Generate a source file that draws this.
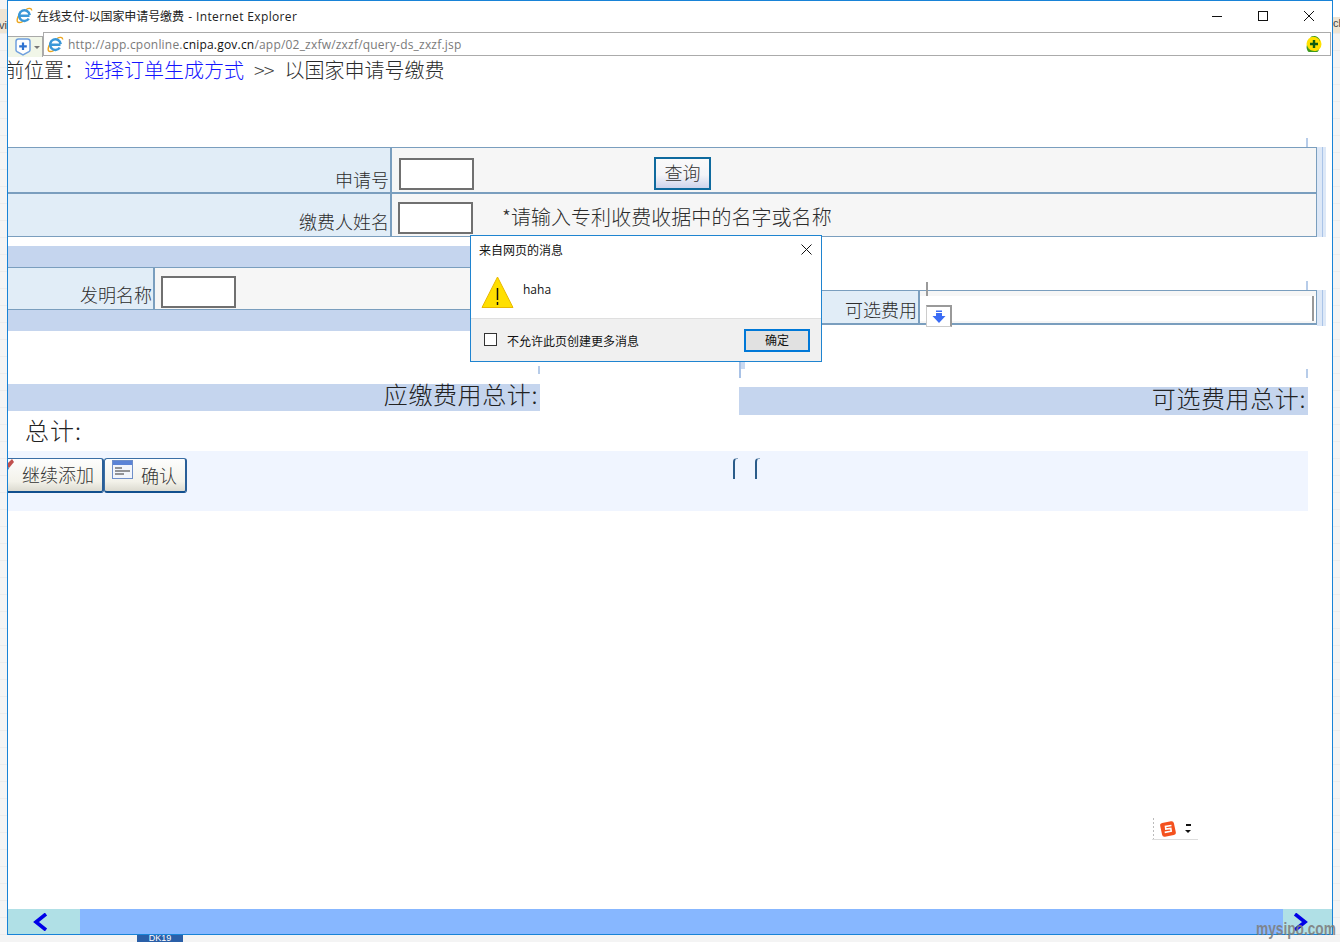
<template>
  <div class="screen">
    <div class="peach peach-l">vi</div>
    <div class="peach peach-r">ch</div>
    <div class="window">
      <header class="titlebar">
        <svg class="ie" width="17" height="17" viewBox="0 0 17 17">
          <path d="M10 2.500C13 .8 15.500 1 15.800 3.500M4 6C1.800 9.500.6 13 1.500 14.800 2.500 16 5 15.400 7 14.300" fill="none" stroke="#eba51e" stroke-width="1.400"/>
          <path d="M4 8.800h9.500M13.700 8.200A5.300 5.300 0 1 0 12.800 11.600" fill="none" stroke="#3a98d8" stroke-width="2.500"/>
        </svg>
        <span class="title"><span class="cn">在线支付-以国家申请号缴费</span> - Internet Explorer</span>
        <div class="controls">
          <svg width="12" height="12" viewBox="0 0 12 12"><path d="M1 6.500h10" stroke="#111" fill="none"/></svg>
          <svg width="12" height="12" viewBox="0 0 12 12"><rect x="1.500" y="1.500" width="9" height="9" stroke="#111" fill="none"/></svg>
          <svg width="12" height="12" viewBox="0 0 12 12"><path d="M1 1l10 10M11 1 1 11" stroke="#111" fill="none"/></svg>
        </div>
      </header>

      <div class="addressrow">
        <div class="newtab">
          <svg width="16" height="18" viewBox="0 0 16 18">
            <path d="M1 3.500Q1 1 3.500 1h9Q15 1 15 3.500V12q0 1-1 1.700L8 17 2 13.700q-1-.7-1-1.700Z" fill="#fff" stroke="#6fa0de" stroke-width="1.500"/>
            <path d="M8 4.500v7.500M4.200 8.300h7.600" stroke="#2f72d0" stroke-width="2.200"/>
          </svg>
          <i class="caret"></i>
        </div>
        <div class="address">
          <svg class="ie" width="17" height="17" viewBox="0 0 17 17">
            <path d="M10 2.500C13 .8 15.500 1 15.800 3.500M4 6C1.800 9.500.6 13 1.500 14.800 2.500 16 5 15.400 7 14.300" fill="none" stroke="#eba51e" stroke-width="1.400"/>
            <path d="M4 8.800h9.500M13.700 8.200A5.300 5.300 0 1 0 12.800 11.600" fill="none" stroke="#3a98d8" stroke-width="2.500"/>
          </svg>
          <span class="url">http://app.cponline.<b>cnipa.gov.cn</b>/app/02_zxfw/zxzf/query-ds_zxzf.jsp</span>
          <svg class="plugin" width="16" height="16" viewBox="0 0 16 16">
            <circle cx="8" cy="8" r="7.500" fill="#ffe100"/>
            <path d="M1 9a7.500 7.500 0 0 0 12 4.500A6 6 0 0 1 1 9ZM14 6A7 7 0 0 0 4 1.500 6 6 0 0 1 14 6Z" fill="#3f9a1e"/>
            <path d="M8 4v8M4 8h8" stroke="#0d5c12" stroke-width="2.400"/>
          </svg>
        </div>
      </div>

      <main class="content">
        <div class="crumb">前位置：<a>选择订单生成方式</a><span class="sep">&gt;&gt;</span>以国家申请号缴费</div>

        <div class="tick tick-a"></div>
        <section class="querywrap">
          <div class="querytable">
            <div class="qrow qrow-1">
              <div class="qlabel"><span>申请号</span></div>
              <div class="qvalue">
                <span class="field"></span>
                <button class="query"><span>查询</span></button>
              </div>
            </div>
            <div class="qrow qrow-2">
              <div class="qlabel"><span>缴费人姓名</span></div>
              <div class="qvalue">
                <span class="field field-2"></span>
                <span class="hint">*请输入专利收费收据中的名字或名称</span>
              </div>
            </div>
          </div>
          <div class="band"></div>
        </section>

        <section class="columns">
          <div class="left">
            <div class="bar"></div>
            <div class="inv">
              <div class="invlabel"><span>发明名称</span></div>
              <div class="invvalue"><span class="field"></span></div>
            </div>
            <div class="bar"></div>
          </div>
          <div class="right">
            <div class="tick tick-b"></div>
            <div class="tick tick-c"></div>
            <div class="optional">
              <div class="optlabel"><span>可选费用</span></div>
              <div class="optvalue">
                <div class="optinner">
                  <span class="drop">
                    <svg width="14" height="14" viewBox="0 0 14 14"><path d="M4 .5h6v1.500H4ZM4 3h6v3h3.500L7 13 .5 6H4Z" fill="#3b6cf5"/></svg>
                  </span>
                  <i class="cursorbar"></i>
                </div>
              </div>
              <div class="band band-2"></div>
            </div>
          </div>
        </section>

        <div class="ticks">
          <i class="t t1"></i>
          <i class="t t2"></i>
          <i class="t t3"></i>
        </div>

        <section class="totals">
          <div class="totalcol totalcol-l"><div class="totalbar">应缴费用总计:</div></div>
          <div class="totalcol totalcol-r"><div class="totalbar totalbar-r">可选费用总计:</div></div>
        </section>

        <div class="sum">总计:</div>

        <section class="actions">
          <button class="btn btn-add">
            <svg class="pin" width="7" height="12" viewBox="0 0 7 12"><path d="M0 4 4 0l2 3-5 6L0 8Z" fill="#c0504d"/><path d="M0 8l1 1-1 2Z" fill="#3a6ea5"/></svg>
            <span class="addtext">继续添加</span>
          </button>
          <button class="btn btn-ok">
            <svg width="22" height="20" viewBox="0 0 22 20">
              <rect x=".5" y=".5" width="20" height="18" fill="#f2f5fb" stroke="#6f8fc9"/>
              <rect x="1" y="1" width="19" height="4" fill="#5b83d6"/>
              <path d="M3 8h7M3 11h15M3 14h9" stroke="#333" stroke-width="1.200"/>
            </svg>
            <span>确认</span>
          </button>
          <span class="curl curl-1"></span>
          <span class="curl curl-2"></span>
        </section>

        <div class="spacer"></div>

        <footer class="pager">
          <div class="pagecell">
            <svg width="15" height="18" viewBox="0 0 15 18"><path d="M13 1 3 9l10 8" fill="none" stroke="#0000e8" stroke-width="3.600"/></svg>
          </div>
          <div class="pagemid"></div>
          <div class="pagecell pagecell-r">
            <svg width="15" height="18" viewBox="0 0 15 18"><path d="M2 1l10 8-10 8" fill="none" stroke="#0000e8" stroke-width="3.600"/></svg>
          </div>
        </footer>
      </main>

      <div class="dialog">
        <div class="dtitle">
          <span>来自网页的消息</span>
          <svg class="dclose" width="11" height="11" viewBox="0 0 11 11"><path d="M.5.5l10 10M10.500.5l-10 10" stroke="#111" fill="none"/></svg>
        </div>
        <div class="dbody">
          <svg width="33" height="32" viewBox="0 0 33 32">
            <path d="M16.500 1 32 31.500H1Z" fill="#ffdf00" stroke="#e8b800"/>
            <path d="M16.500 12v12M16.500 26v3" stroke="#111" stroke-width="1.500"/>
          </svg>
          <span class="dmsg">haha</span>
        </div>
        <div class="dfoot">
          <span class="check"></span>
          <span class="dlabel">不允许此页创建更多消息</span>
          <button class="dok">确定</button>
        </div>
      </div>

      <div class="ime">
        <svg width="18" height="18" viewBox="0 0 18 18">
          <rect x="2" y="2" width="14" height="14" rx="2.500" transform="rotate(-12 9 9)" fill="#f4511e"/>
          <path d="M12.500 5.500 6.500 6.500 6.800 9l5-.6.400 2.800-6.500 1.200" fill="none" stroke="#fff" stroke-width="1.600"/>
        </svg>
        <span class="imedots"><i></i><i class="tri"></i></span>
      </div>
    </div>

    <div class="desktab">DK19</div>
    <div class="mark">mysipo.com</div>
  </div>
</template>

<style>
html, body { margin: 0; padding: 0; }
</style>

<style scoped>
.screen {
  position: relative;
  width: 1340px;
  height: 942px;
  overflow: hidden;
  background: repeating-linear-gradient(180deg, #f4f4f4 0 16px, #ececec 16px 17px);
  font-family: "Noto Sans CJK SC", "Noto Sans", sans-serif;
  color: #2c2c2c;
}
.peach {
  position: absolute;
  width: 7px;
  background: #efe5d4;
  color: #444;
  font: 11px/14px "Liberation Sans", sans-serif;
  overflow: hidden;
}
.peach-l { left: 0; top: 9px; height: 24px; padding-top: 9px; box-sizing: border-box; direction: rtl; }
.peach-r { left: 1333px; top: 0; height: 33px; padding-top: 16px; box-sizing: border-box; background: linear-gradient(180deg, #fff 0 17px, #efe5d4 17px); }
.window {
  position: relative;
  box-sizing: border-box;
  width: 1326px;
  height: 935px;
  margin-left: 7px;
  border: 1px solid #1883d7;
  background: #fff;
  display: flex;
  flex-direction: column;
}
.titlebar {
  height: 31px;
  flex: none;
  display: flex;
  align-items: center;
  padding: 0 0 2px 8px;
  box-sizing: border-box;
  font-size: 12px;
  color: #222;
}
.title { margin-left: 4px; font-family: "Open Sans", "Noto Sans CJK SC", sans-serif; font-size: 12px; letter-spacing: .35px; }
.title .cn { font-family: "Noto Sans CJK SC", sans-serif; letter-spacing: -0.1px; margin-right: 1px; }
.controls {
  margin-left: auto;
  display: flex;
  gap: 34px;
  padding-right: 17px;
  margin-top: 1px;
}
.addressrow {
  height: 24px;
  flex: none;
  display: flex;
  align-items: flex-end;
}
.newtab {
  box-sizing: border-box;
  width: 35px;
  height: 21px;
  margin-bottom: -1px;
  background: #f1f6e8;
  border: 1px solid #a9a9a9;
  border-left: 0;
  border-bottom: 0;
  display: flex;
  align-items: center;
  padding-left: 7px;
  gap: 3px;
}
.caret { width: 0; height: 0; border: 3px solid transparent; border-top: 3px solid #777; margin-top: 3px; }
.address {
  box-sizing: border-box;
  flex: 1;
  height: 24px;
  margin-right: 1px;
  border: 1px solid #ababab;
  display: flex;
  align-items: center;
  padding-left: 3px;
}
.url { margin-left: 4px; font-family: "Open Sans", sans-serif; font-size: 12px; letter-spacing: .2px; color: #7a7a7a; }
.url b { font-weight: 400; color: #111; }
.plugin { margin-left: auto; margin-right: 8px; }

.content {
  flex: 1;
  display: flex;
  flex-direction: column;
  min-height: 0;
  overflow: hidden;
}
.crumb {
  height: 28px;
  flex: none;
  font-size: 20px;
  line-height: 28px;
  font-weight: 300;
  margin-left: -4px;
  white-space: nowrap;
}
.crumb a { color: #1414ff; }
.sep { margin: 0 11px 0 10px; color: #444; letter-spacing: -1px; }

.tick { width: 2px; background: #b7cce9; }
.tick-a { height: 9px; margin: 54px 0 0 1298px; flex: none; }

.querywrap { display: flex; flex: none; height: 90px; width: 1318px; }
.querytable { width: 1309px; border-top: 1px solid #7a9ebe; border-bottom: 1px solid #7a9ebe; box-sizing: border-box; }
.qrow { display: flex; box-sizing: border-box; border-right: 1px solid #7a9ebe; }
.qrow-1 { height: 46px; border-bottom: 2px solid #7a9ebe; }
.qrow-2 { height: 42px; }
.qlabel {
  width: 384px;
  flex: none;
  background: #e1edf7;
  border-right: 2px solid #7a9ebe;
  font-size: 18px;
  line-height: 24px;
  font-weight: 300;
  padding-right: 1px;
  box-sizing: border-box;
  display: flex;
  align-items: flex-end;
  justify-content: flex-end;
}
.qlabel span { transform: translateY(-1px); }
.qrow-2 .qlabel span { transform: translateY(-3px); }
.qvalue {
  flex: 1;
  background: #f6f6f6;
  display: flex;
  align-items: flex-start;
  padding-left: 7px;
}
.field {
  display: block;
  box-sizing: border-box;
  width: 75px;
  height: 32px;
  margin-top: 10px;
  background: #fff;
  border: 2px solid #707070;
}
.field-2 { margin-top: 8px; margin-left: -1px; }
.query {
  width: 57px;
  height: 33px;
  margin: 9px 0 0 180px;
  padding: 0 0 4px;
  box-sizing: border-box;
  background: linear-gradient(180deg, #fafafa, #f4f4f8 55%, #cfd4ec);
  border: 2px solid #0f6a9e;
  font-family: inherit;
  font-size: 18px;
  font-weight: 300;
  color: #333;
}
.hint { margin: 9px 0 0 29px; font-size: 20px; line-height: 28px; font-weight: 300; letter-spacing: .05px; }
.band { width: 9px; background: linear-gradient(90deg, #dde8f7 0 5px, #aac4e8 5px 6px, #dde8f7 6px); }

.columns { display: flex; flex: none; height: 94px; margin-top: 9px; }
.left { width: 731px; flex: none; }
.bar { background: #c5d5ee; height: 21px; }
.inv { display: flex; height: 43px; border-top: 1px solid #7a9ebe; border-bottom: 1px solid #7a9ebe; box-sizing: border-box; }
.invlabel {
  width: 147px;
  background: #e1edf7;
  border-right: 2px solid #7a9ebe;
  box-sizing: border-box;
  flex: none;
  display: flex;
  align-items: flex-end;
  justify-content: flex-end;
  font-size: 18px;
  font-weight: 300;
  line-height: 24px;
  padding: 0 1px 3px 0;
}
.invvalue { flex: 1; background: #f6f6f6; padding-left: 6px; }
.invvalue .field { margin-top: 8px; }
.right { flex: 1; position: relative; }
.tick-b { height: 14px; position: absolute; top: 36px; left: 187px; background: #9a9a9a; }
.tick-c { height: 9px; position: absolute; top: 35px; left: 567px; }
.optional { display: flex; height: 36px; margin: 44px 0 0 82px; }
.optlabel {
  width: 99px;
  height: 35px;
  background: #e1edf7;
  border: 1px solid #7a9ebe;
  border-width: 1px 2px 2px 0;
  box-sizing: border-box;
  display: flex;
  align-items: flex-end;
  justify-content: flex-end;
  font-size: 18px;
  font-weight: 300;
  line-height: 24px;
  padding: 0 1px 2px 0;
}
.optvalue {
  width: 397px;
  height: 35px;
  box-sizing: border-box;
  border: 1px solid #7a9ebe;
  border-width: 1px 1px 2px 0;
  background: #f6f6f6;
  padding: 5px 0 2px;
}
.optinner { position: relative; background: #fff; height: 100%; }
.drop {
  position: absolute;
  left: 6px;
  top: 9px;
  width: 26px;
  height: 22px;
  box-sizing: border-box;
  border: 1px solid #ccc;
  border-top: 2px solid #999;
  border-right: 2px solid #999;
  background: #fff;
  display: flex;
  align-items: center;
  justify-content: center;
}
.cursorbar { position: absolute; right: 2px; top: 0; width: 2px; height: 100%; background: #999; }
.band-2 { height: 36px; }

.ticks { display: flex; flex: none; height: 44px; }
.t { display: block; position: relative; width: 2px; background: #b7cce9; }
.t1 { height: 8px; margin: 26px 0 0 530px; }
.t2 { height: 16px; margin: 22px 0 0 199px; background: #a9c2e6; }
.t2::after { content: ""; position: absolute; left: 2px; top: 0; width: 4px; height: 7px; background: #c9d9f1; }
.t3 { height: 9px; margin: 29px 0 0 565px; }

.totals { display: flex; flex: none; height: 36px; }
.totalcol { flex: none; }
.totalcol-l { width: 532px; margin-right: 199px; }
.totalcol-r { width: 569px; padding-top: 3px; }
.totalbar { background: #c5d5ee; height: 27px; text-align: right; font-size: 24px; line-height: 20px; font-weight: 300; letter-spacing: .6px; padding-right: 2px; color: #222; box-sizing: border-box; }
.totalbar-r { height: 28px; line-height: 21px; }

.sum { height: 31px; flex: none; font-size: 24px; line-height: 20px; padding-left: 17px; font-weight: 300; letter-spacing: 1px; color: #222; }
.actions {
  position: relative;
  width: 1300px;
  height: 60px;
  flex: none;
  background: #f0f5ff;
  display: flex;
  align-items: flex-start;
  padding-top: 7px;
  box-sizing: border-box;
}
.btn {
  position: relative;
  height: 35px;
  box-sizing: border-box;
  padding: 0;
  background: linear-gradient(180deg, #fdfdfd, #f3f2ea 70%, #dcdad0);
  border: 1px solid #3a6ea5;
  border-bottom: 2px solid #114f8e;
  border-right: 2px solid #2a5f98;
  border-radius: 3px;
  font-family: inherit;
  font-size: 18px;
  font-weight: 300;
  color: #333;
  display: flex;
  align-items: center;
}
.btn-add { width: 96px; padding-left: 14px; border-left: 0; border-radius: 0 3px 3px 0; }
.addtext { margin-top: -2px; }
.pin { position: absolute; left: 0; top: 0; }
.btn-ok { width: 83px; padding-left: 7px; align-items: flex-start; }
.btn-ok svg { margin-top: 1px; }
.btn-ok span { margin: 3px 0 0 7px; }
.curl { position: absolute; top: 7px; width: 5px; height: 21px; border-left: 2px solid #2b5c8a; border-top: 1px solid #8aa6c2; border-top-left-radius: 4px; box-sizing: border-box; }
.curl-1 { left: 725px; }
.curl-2 { left: 747px; }
.spacer { flex: 1; }
.pager { height: 25px; flex: none; display: flex; background: #87b7ff; }
.pagecell { width: 72px; background: #b0e0e6; display: flex; align-items: center; justify-content: center; padding-right: 8px; box-sizing: border-box; }
.pagecell-r { width: 49px; padding-right: 14px; }
.pagemid { flex: 1; }

.dialog {
  position: absolute;
  left: 462px;
  top: 234px;
  width: 352px;
  height: 127px;
  box-sizing: border-box;
  border: 1px solid #1f84d0;
  background: #fff;
  color: #111;
  z-index: 2;
  display: flex;
  flex-direction: column;
}
.dtitle {
  height: 28px;
  display: flex;
  align-items: center;
  justify-content: space-between;
  padding: 0 9px 2px 8px;
  box-sizing: border-box;
  font-size: 12px;
}
.dclose { margin-top: 1px; }
.dbody { height: 54px; display: flex; align-items: flex-start; padding: 12px 0 0 10px; box-sizing: border-box; }
.dmsg { margin: 5px 0 0 9px; font-family: "Open Sans", sans-serif; font-size: 12px; }
.dfoot {
  flex: 1;
  background: #f0f0f0;
  border-top: 1px solid #dfdfdf;
  display: flex;
  align-items: center;
  padding: 0 11px 0 13px;
  font-size: 12px;
}
.check { width: 13px; height: 13px; box-sizing: border-box; border: 1px solid #333; background: #fff; margin-top: -2px; }
.dlabel { margin: 1px 0 0 10px; }
.dok {
  margin-left: auto;
  width: 66px;
  height: 23px;
  box-sizing: border-box;
  padding: 0 0 2px;
  border: 2px solid #0078d7;
  background: #e1e1e1;
  font-family: inherit;
  font-size: 12px;
  color: #111;
}

.ime {
  position: absolute;
  left: 1144px;
  top: 817px;
  width: 46px;
  height: 22px;
  box-sizing: border-box;
  border-bottom: 1px solid #ddd;
  display: flex;
  align-items: center;
  gap: 8px;
  padding-left: 7px;
  background-image: linear-gradient(#bbb 50%, transparent 50%);
  background-size: 1px 4px;
  background-repeat: repeat-y;
  background-position: 1px 0;
}
.imedots { display: flex; flex-direction: column; align-items: center; gap: 4px; }
.imedots i { display: block; width: 5px; height: 2px; background: #111; }
.imedots .tri { width: 0; height: 0; background: none; border: 3px solid transparent; border-top: 3px solid #111; border-bottom: 0; }

.desktab {
  position: absolute;
  left: 137px;
  top: 935px;
  width: 46px;
  height: 7px;
  background: #2a5fa8;
  color: #fff;
  font: 9px/6px "Liberation Sans", sans-serif;
  text-align: center;
  overflow: hidden;
}
.mark {
  position: absolute;
  left: 1256px;
  top: 919px;
  font: bold 18px/20px "Liberation Sans", sans-serif;
  transform: scaleX(.76);
  transform-origin: left center;
  white-space: nowrap;
  color: rgba(125, 125, 125, .88);
}
</style>
